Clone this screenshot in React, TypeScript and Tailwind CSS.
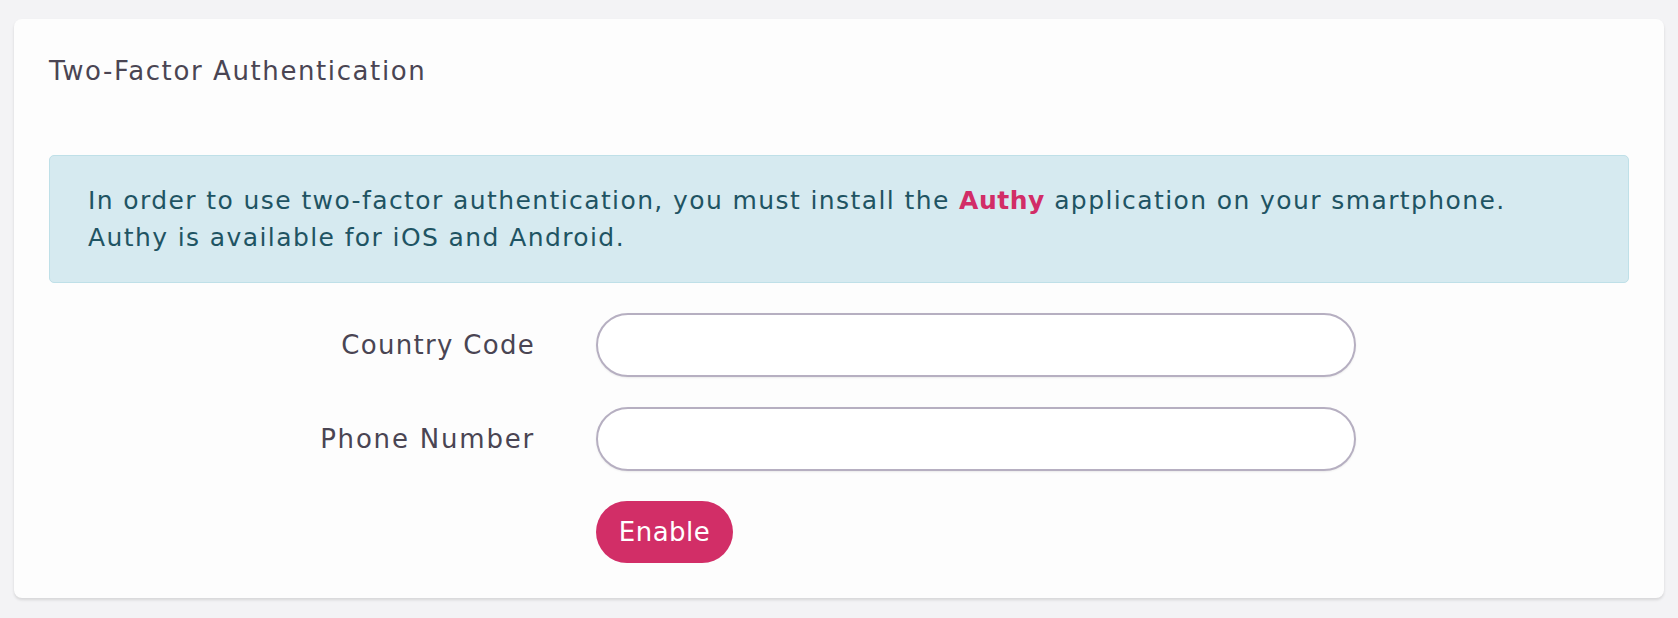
import React from "react";

export default function App() {
  return (
    <div
      className="min-h-[618px] w-full bg-[#f3f3f5] px-[14px] pt-[19px] pb-[19px]"
      style={{ fontFamily: "'DejaVu Sans', 'Noto Sans', sans-serif" }}
    >
      <div className="rounded-[8px] bg-[#fdfdfd] px-[35px] pt-[37px] pb-[35px] shadow-[0_2px_3px_rgba(0,0,0,0.12)]">
        <h2 className="text-[26px] leading-[30px] font-normal tracking-[1.6px] text-[#4a4553]">
          Two-Factor Authentication
        </h2>

        <div className="mt-[69px] rounded-[5px] border border-[#bfe0e8] bg-[#d6eaf0] px-[38px] py-[26px] text-[25px] leading-[37px] tracking-[1.4px] text-[#1f5463]">
          <p>
            In order to use two-factor authentication, you must install the{" "}
            <span className="font-bold tracking-[0.5px] text-[#d22d67]">Authy</span> application on your
            smartphone.
          </p>
          <p>Authy is available for iOS and Android.</p>
        </div>

        <div className="mt-[30px] grid grid-cols-[486px_760px] gap-x-[61px] gap-y-[30px] items-center">
          <label className="text-right text-[26px] tracking-[1.3px] text-[#4a4553]">Country Code</label>
          <input
            type="text"
            className="h-[64px] w-[760px] rounded-full border-2 border-[#b6afc1] bg-white px-6 text-[20px] outline-none shadow-[0_1px_2px_rgba(0,0,0,0.08)]"
          />
          <label className="text-right text-[26px] tracking-[1.8px] text-[#4a4553]">Phone Number</label>
          <input
            type="text"
            className="h-[64px] w-[760px] rounded-full border-2 border-[#b6afc1] bg-white px-6 text-[20px] outline-none shadow-[0_1px_2px_rgba(0,0,0,0.08)]"
          />
          <div />
          <div>
            <button
              type="button"
              className="h-[62px] w-[137px] rounded-full bg-[#d22e67] text-[26px] tracking-[0.5px] text-white"
            >
              Enable
            </button>
          </div>
        </div>
      </div>
    </div>
  );
}
